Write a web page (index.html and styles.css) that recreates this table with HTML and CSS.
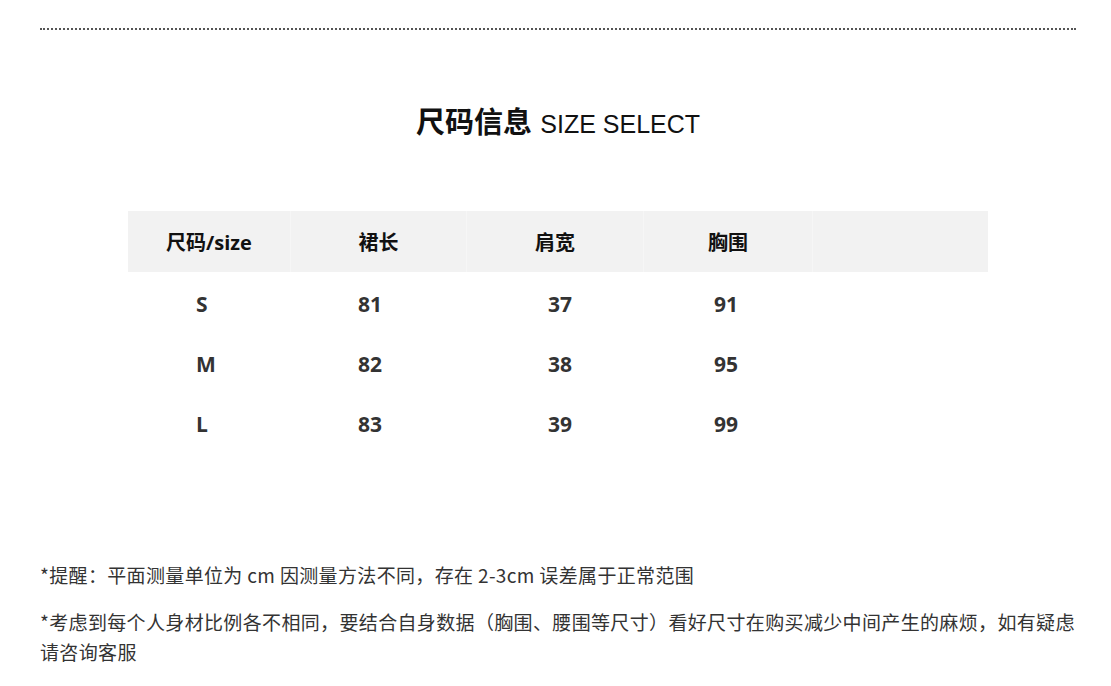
FILE: index.html
```html
<!DOCTYPE html>
<html lang="zh-CN">
<head>
<meta charset="utf-8">
<title>尺码信息</title>
<link rel="stylesheet" href="styles.css">
</head>
<body>
<div class="page">
  <div class="rule"></div>
  <h1 class="title"><span class="title-cn">尺码信息</span> <span class="title-en">SIZE SELECT</span></h1>
  <div class="table">
    <div class="thead">
      <div class="th c1">尺码/size</div>
      <div class="th c2">裙长</div>
      <div class="th c3">肩宽</div>
      <div class="th c4">胸围</div>
      <div class="th c5"></div>
    </div>
    <div class="tbody">
      <div class="tr"><span>S</span><span>81</span><span>37</span><span>91</span></div>
      <div class="tr"><span>M</span><span>82</span><span>38</span><span>95</span></div>
      <div class="tr"><span>L</span><span>83</span><span>39</span><span>99</span></div>
    </div>
  </div>
  <div class="notes">
    <p>*提醒：平面测量单位为 cm 因测量方法不同，存在 2-3cm 误差属于正常范围</p>
    <p>*考虑到每个人身材比例各不相同，要结合自身数据（胸围、腰围等尺寸）看好尺寸在购买减少中间产生的麻烦，如有疑虑请咨询客服</p>
  </div>
</div>
</body>
</html>
```
FILE: styles.css
```css
html, body {
  margin: 0;
  padding: 0;
  background: #fff;
}
body {
  font-family: "Open Sans", "Noto Sans CJK SC", sans-serif;
  color: #333;
}
.page {
  width: 1036px;
  padding: 28px 0 0 40px;
}
.rule {
  border-top: 2px dotted #555;
  height: 0;
}
.title {
  margin: 70px 0 0 0;
  height: 40px;
  line-height: 40px;
  text-align: center;
  font-weight: normal;
  color: #111;
}
.title-cn {
  font-family: "Noto Sans CJK SC", sans-serif;
  font-weight: 700;
  font-size: 29px;
}
.title-en {
  font-family: "Liberation Sans", Arial, sans-serif;
  font-size: 25px;
}
.table {
  margin: 71px 0 0 88px;
  width: 860px;
}
.thead {
  display: grid;
  grid-template-columns: 162px 176px 177px 169px 176px;
  height: 61px;
  background: #f2f2f2;
}
.th {
  display: flex;
  align-items: center;
  justify-content: center;
  font-size: 20px;
  font-weight: 700;
  color: #111;
}
.th + .th {
  border-left: 1px solid #f6f6f6;
}
.tbody {
  margin-top: 2px;
}
.tr {
  display: grid;
  grid-template-columns: 162px 190px 166px auto;
  padding-left: 68px;
  height: 60px;
  align-items: center;
  font-size: 21px;
  font-weight: 700;
  color: #333;
}
.notes {
  margin-top: 106px;
  font-family: "Noto Sans CJK SC", sans-serif;
  font-size: 19px;
  letter-spacing: 0.35px;
  line-height: 30px;
  color: #333;
}
.notes p {
  margin: 0 0 17px 0;
}
```
